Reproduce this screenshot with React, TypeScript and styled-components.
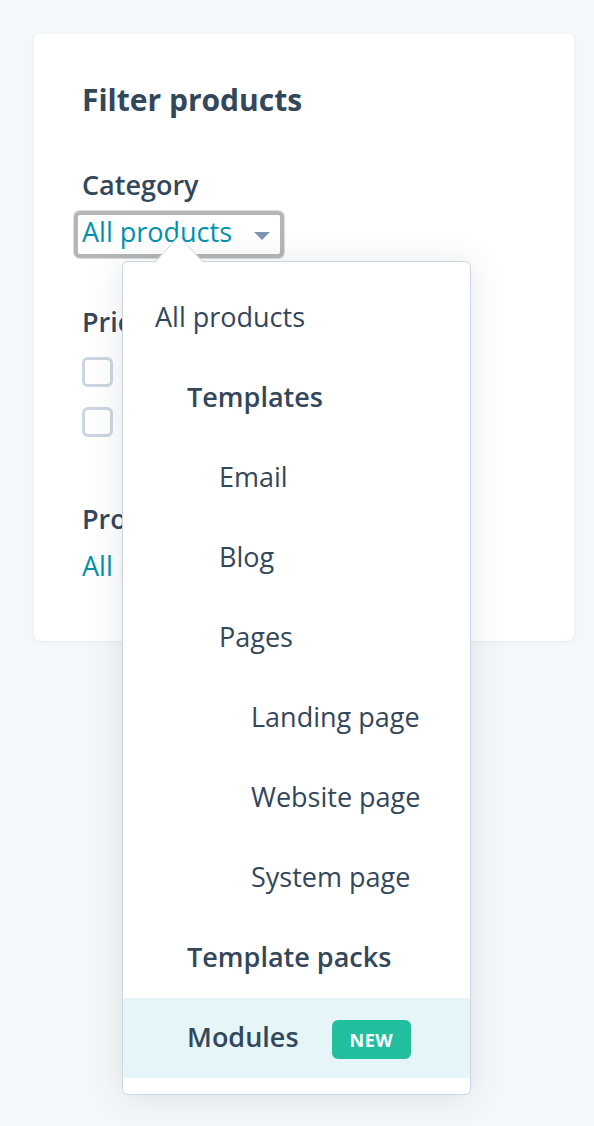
import React from "react";
import styled, { createGlobalStyle } from "styled-components";

const Global = createGlobalStyle`
  html, body { margin: 0; padding: 0; background: #f5f8fa; }
  body { font-family: "Open Sans", "Noto Sans", sans-serif; color: #33475b; -webkit-font-smoothing: antialiased; }
  * { box-sizing: border-box; }
`;

const Page = styled.div`
  min-height: 1126px;
  padding: 34px 20px 34px 34px;
  background: #f5f8fa;
`;

const Card = styled.section`
  width: 540px;
  background: #ffffff;
  border-radius: 6px;
  box-shadow: 0 1px 4px rgba(45, 62, 80, 0.08);
  padding: 46px 48px 49px 48px;
`;

const Heading = styled.h2`
  margin: 0 0 48px 0;
  font-size: 30px;
  line-height: 40px;
  font-weight: 700;
  color: #33475b;
`;

const Group = styled.div<{ $gap?: number }>`
  position: relative;
  margin-bottom: ${(p) => p.$gap ?? 0}px;
`;

const Label = styled.div`
  font-size: 27px;
  line-height: 34px;
  font-weight: 600;
  color: #33475b;
  margin-bottom: 9px;
`;

const SelectButton = styled.div<{ $focused?: boolean }>`
  display: flex;
  width: fit-content;
  align-items: flex-start;
  gap: 22px;
  margin: ${(p) => (p.$focused ? "0" : "9px")} 0 0 -8px;
  padding: 0 10px 5px 4px;
  border: 4px solid ${(p) => (p.$focused ? "#b6b6b6" : "transparent")};
  border-radius: 6px;
  box-shadow: ${(p) => (p.$focused ? "0 0 0 1px #dcdcdc" : "none")};
  font-size: 27px;
  line-height: 34px;
  color: #0091ae;
  background: #fff;
`;

const Caret = styled.svg`
  margin-top: 17px;
  flex: none;
`;

const CheckList = styled.div`
  display: flex;
  flex-direction: column;
  gap: 20px;
  margin-top: 18px;
`;

const CheckRow = styled.label`
  display: flex;
  align-items: center;
  gap: 14px;
  font-size: 24px;
  line-height: 30px;
  color: #33475b;
`;

const Box = styled.span`
  width: 31px;
  height: 30px;
  border: 3px solid #cbd6e2;
  border-radius: 6px;
  background: #fff;
  flex: none;
`;

const Dropdown = styled.div`
  position: absolute;
  top: 93px;
  left: 40px;
  width: 349px;
  padding: 16px 0;
  background: #fff;
  border: 1px solid #cbd6e2;
  border-radius: 6px;
  box-shadow: 0 2px 34px rgba(45, 62, 80, 0.13);
  z-index: 10;
`;

const Pointer = styled.svg`
  position: absolute;
  top: -27px;
  left: 31px;
`;

const Item = styled.div<{ $level: number; $bold?: boolean; $active?: boolean }>`
  display: flex;
  align-items: center;
  height: 80px;
  padding: 0 0 4px ${(p) => 32 + p.$level * 32}px;
  font-size: 27px;
  font-weight: ${(p) => (p.$bold ? 600 : 400)};
  color: #33475b;
  background: ${(p) => (p.$active ? "#e5f5f8" : "transparent")};
`;

const Badge = styled.span`
  display: inline-flex;
  align-items: center;
  justify-content: center;
  height: 39px;
  padding: 0 18px;
  margin-left: 33px;
  margin-top: 7px;
  border-radius: 6px;
  background: #22bf9f;
  color: #fff;
  font-size: 18px;
  font-weight: 700;
  letter-spacing: 0.5px;
`;

const items: { label: string; level: number; bold?: boolean; badge?: string; active?: boolean }[] = [
  { label: "All products", level: 0 },
  { label: "Templates", level: 1, bold: true },
  { label: "Email", level: 2 },
  { label: "Blog", level: 2 },
  { label: "Pages", level: 2 },
  { label: "Landing page", level: 3 },
  { label: "Website page", level: 3 },
  { label: "System page", level: 3 },
  { label: "Template packs", level: 1, bold: true },
  { label: "Modules", level: 1, bold: true, badge: "NEW", active: true },
];

const CaretIcon = () => (
  <Caret width="16" height="9" viewBox="0 0 16 9">
    <polygon points="0,0 16,0 8,8" fill="#7c98b6" />
  </Caret>
);

export default function App() {
  return (
    <>
      <Global />
      <Page>
        <Card>
          <Heading>Filter products</Heading>
          <Group $gap={47}>
            <Label>Category</Label>
            <SelectButton $focused>
              All products
              <CaretIcon />
            </SelectButton>
            <Dropdown>
              <Pointer width="50" height="28" viewBox="0 0 50 28">
                <polygon points="0,28 25,1 50,28" fill="#fff" />
                <polyline points="0.5,27.5 25,1.2 49.5,27.5" fill="none" stroke="#cbd6e2" strokeWidth="1" />
              </Pointer>
              {items.map((it) => (
                <Item key={it.label} $level={it.level} $bold={it.bold} $active={it.active}>
                  {it.label}
                  {it.badge && <Badge>{it.badge}</Badge>}
                </Item>
              ))}
            </Dropdown>
          </Group>
          <Group $gap={65}>
            <Label>Price</Label>
            <CheckList>
              <CheckRow>
                <Box />
                Free
              </CheckRow>
              <CheckRow>
                <Box />
                Paid
              </CheckRow>
            </CheckList>
          </Group>
          <Group>
            <Label>Product type</Label>
            <SelectButton>
              All products
              <CaretIcon />
            </SelectButton>
          </Group>
        </Card>
      </Page>
    </>
  );
}
